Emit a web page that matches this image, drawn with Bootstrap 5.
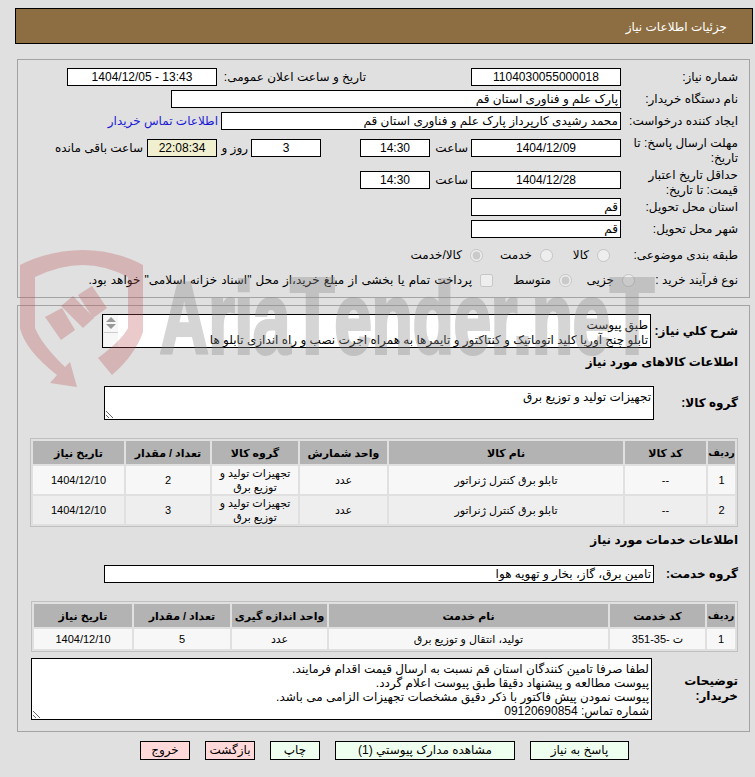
<!DOCTYPE html>
<html lang="fa" dir="rtl">
<head>
    <meta charset="utf-8">
    <title>جزئیات اطلاعات نیاز</title>
    <link rel="stylesheet" href="https://cdn.jsdelivr.net/npm/bootstrap@5.3.0/dist/css/bootstrap.min.css">
    <style>
        html, body {
            height: 777px;
            overflow: hidden;
        }
        body {
            background: #e0e0e0;
            color: #000;
            font: 12px/15px "Liberation Sans", "DejaVu Sans", sans-serif;
            position: relative;
        }
        .head-bar {
            margin: 8px 2px 0 15px;
            height: 36px;
            line-height: 37px;
            padding-right: 25px;
            background: #8d6e42;
            border: 1px solid #000;
            color: #fff;
        }
        .box {
            margin: 15px 5px 0 17px;
            border: 1px solid #a3a3a3;
            padding: 8px 11px 8px 0;
        }
        .box + .box { margin-top: 7px; padding-bottom: 11px; }
        .frow { margin-bottom: 4px; height: 18px; }
        .frow.two { height: 30px; align-items: flex-start; margin-bottom: 2px; }
        .frow.two input { margin-top: 3px; }
        .frow.two .unit { margin-top: 5px; }
        .lbl { width: 117px; flex: none; }
        .lbl-b { font-weight: bold; width: 87px; flex: none; }
        .lbl-g { font-weight: bold; width: 84px; flex: none; }
        .lbl-short { width: 103px; flex: none; }
        .lbl-note { width: 86px; flex: none; font-weight: bold; }
        .fld {
            height: 18px;
            border: 1px solid #000;
            background: #fff;
            padding: 0 2px;
            font: inherit;
            outline: 0;
            border-radius: 0;
            flex: none;
        }
        input.fld { display: block; }
        .w150 { width: 150px; }
        .w70 { width: 70px; }
        .w450 { width: 450px; }
        .w400 { width: 400px; }
        .wide { width: 550px; }
        .wide-s { width: 549px; }
        .timer { background: #f0f0d0; width: 70px; }
        .area {
            display: block;
            padding: 3px 2px 0;
            resize: both;
            height: 34px;
        }
        .area-note { width: 621px; height: 62px; line-height: 14px; }
        .head-line { font-weight: bold; height: 16px; }
        .head-goods { margin: 7px 0 15px; }
        .head-serv { margin: 6px 0 16px; }
        .grid-tbl {
            border-collapse: separate;
            border-spacing: 2px;
            border: 1px solid #c0c0c0;
            table-layout: fixed;
            font-size: 11px;
            line-height: 14px;
            text-align: center;
            width: 707px;
            margin-top: 18px;
        }
        .grid-tbl th { background: #b3b3b3; height: 23px; padding: 0; }
        .grid-tbl th:first-child { font-size: 10px; }
        .grid-tbl td { padding: 0 4px; }
        .tbl-goods td { height: 28px; background: #f7f7f7; }
        .tbl-goods tr.alt td { background: #eee; }
        .tbl-serv td { height: 20px; background: #f7f7f7; }
        .act {
            height: 19px;
            padding: 0;
            font: inherit;
            border: 1px solid #000;
            border-radius: 0;
            color: #000;
            background: #efffef;
            flex: none;
            width: 50px;
        }
        .act.red { background: #ffd9d9; }
        .act.w99 { width: 99px; }
        .act.w180 { width: 180px; }
        .foot-row { margin-top: 9px; padding-right: 126px; gap: 15px; }
        .wm {
            position: absolute;
            left: 0;
            top: 0;
            pointer-events: none;
        }
        .wm-word {
            font: bold 100px "Liberation Sans", sans-serif;
            fill: #888;
            stroke: #888;
            stroke-width: 4px;
            opacity: .35;
        }
        .wm-cap { font-size: 108px; }
        .wm-shield { fill: #b85050; opacity: .3; }
        .mt-lbl2 { margin-right: 105px; width: 149px; flex: none; }
        .buyer-link { margin-right: 3px; color: #1a1ad6; }
        .unit-a { width: 41px; padding-right: 3px; flex: none; }
        .gap-days { margin-right: 39px; }
        .unit-b { width: 34px; padding-right: 3px; flex: none; }
        .row-creator { margin-bottom: 6px; }
        .gap-after-city { margin-bottom: 8px; }
        .gap-after-cat { margin-bottom: 7px; }
        .opt { flex: none; }
        .opt1 { width: 68px; padding-right: 11px; }
        .opt2 { width: 70px; }
        .opt3 { width: 63px; }
        .opt4 { width: 79px; }
        .radio-a { margin: 0; width: 13px; height: 13px; flex: none; }
        .txt-wide { word-spacing: .8px; }
        .note-row { margin-top: 6px; }
        /* scrollbar of the first textarea: headless chrome hides the native one */
        .sbar {
            position: absolute;
            left: 1px;
            top: 1px;
            width: 15px;
            height: 32px;
            background: #f7f7f7;
            border-left: 1px solid #eee;
        }
        .sbar-up, .sbar-down {
            display: block;
            width: 0;
            margin: 0 auto;
            border-left: 5px solid transparent;
            border-right: 5px solid transparent;
        }
        .sbar-up { border-bottom: 5px solid #999; margin-top: 2px; }
        .sbar-down { border-top: 5px solid #999; margin-top: 2px; }
        .sbar-line { display: block; height: 1px; background: #ccc; margin-top: 3px; }
    </style>
</head>
<body>
<div class="head-bar">جزئیات اطلاعات نیاز</div>

<div class="box">
    <div class="frow d-flex align-items-center">
        <div class="lbl">شماره نیاز:</div>
        <input class="fld w150 text-center" value="1104030055000018" readonly>
        <div class="mt-lbl2">تاریخ و ساعت اعلان عمومی:</div>
        <input class="fld w150 text-center" value="1404/12/05 - 13:43" dir="ltr" readonly>
    </div>
    <div class="frow d-flex align-items-center">
        <div class="lbl">نام دستگاه خریدار:</div>
        <input class="fld w450" value="پارک علم و فناوری استان قم" readonly>
    </div>
    <div class="frow d-flex align-items-center row-creator">
        <div class="lbl">ایجاد کننده درخواست:</div>
        <input class="fld w400" value="محمد رشیدی کارپرداز پارک علم و فناوری استان قم" readonly>
        <a href="#" class="text-decoration-none buyer-link">اطلاعات تماس خریدار</a>
    </div>
    <div class="frow two d-flex">
        <div class="lbl">مهلت ارسال پاسخ: تا تاریخ:</div>
        <input class="fld w150 text-center" value="1404/12/09" readonly>
        <span class="unit unit-a">ساعت</span>
        <input class="fld w70 text-center" value="14:30" readonly>
        <input class="fld w70 text-center gap-days" value="3" readonly>
        <span class="unit unit-b">روز و</span>
        <input class="fld timer text-center" value="22:08:34" readonly>
        <span class="unit pe-1">ساعت باقی مانده</span>
    </div>
    <div class="frow two d-flex mb-0">
        <div class="lbl">حداقل تاریخ اعتبار قیمت: تا تاریخ:</div>
        <input class="fld w150 text-center" value="1404/12/28" readonly>
        <span class="unit unit-a">ساعت</span>
        <input class="fld w70 text-center" value="14:30" readonly>
    </div>
    <div class="frow d-flex align-items-center">
        <div class="lbl">استان محل تحویل:</div>
        <input class="fld w150" value="قم" readonly>
    </div>
    <div class="frow d-flex align-items-center gap-after-city">
        <div class="lbl">شهر محل تحویل:</div>
        <input class="fld w150" value="قم" readonly>
    </div>
    <div class="frow d-flex align-items-center gap-after-cat">
        <div class="lbl">طبقه بندی موضوعی:</div>
        <label class="opt opt1 d-flex align-items-center gap-2"><input class="radio-a" type="radio" name="cat" disabled>کالا</label>
        <label class="opt opt2 d-flex align-items-center gap-2"><input class="radio-a" type="radio" name="cat" disabled>خدمت</label>
        <label class="opt d-flex align-items-center gap-2"><input class="radio-a" type="radio" name="cat" disabled checked>کالا/خدمت</label>
    </div>
    <div class="frow d-flex align-items-center mb-0">
        <div class="lbl-short">نوع فرآیند خرید :</div>
        <label class="opt opt3 d-flex align-items-center gap-2"><input class="radio-a" type="radio" name="proc" disabled>جزیی</label>
        <label class="opt opt4 d-flex align-items-center gap-2"><input class="radio-a" type="radio" name="proc" disabled checked>متوسط</label>
        <label class="opt txt-wide d-flex align-items-center gap-2"><input class="radio-a" type="checkbox" disabled>پرداخت تمام یا بخشی از مبلغ خرید،از محل "اسناد خزانه اسلامی" خواهد بود.</label>
    </div>
</div>

<div class="box">
    <div class="d-flex align-items-center">
        <div class="lbl-b">شرح کلي نیاز:</div>
        <div class="position-relative">
            <textarea class="fld area wide-s" readonly>طبق پیوست
تابلو چنج آوریا کلید اتوماتیک و کنتاکتور و تایمرها به همراه اجرت نصب و راه اندازی تابلو ها</textarea>
            <div class="sbar"><span class="sbar-up"></span><span class="sbar-down"></span><span class="sbar-line"></span></div>
        </div>
    </div>
    <div class="head-line head-goods">اطلاعات کالاهای مورد نیاز</div>
    <div class="d-flex align-items-center">
        <div class="lbl-g">گروه کالا:</div>
        <textarea class="fld area wide" readonly>تجهیزات تولید و توزیع برق</textarea>
    </div>
    <table class="grid-tbl tbl-goods">
        <colgroup><col style="width:27px"><col style="width:81px"><col style="width:234px"><col style="width:87px"><col style="width:86px"><col style="width:84px"><col style="width:91px"></colgroup>
        <tr>
            <th>ردیف</th><th>کد کالا</th><th>نام کالا</th><th>واحد شمارش</th><th>گروه کالا</th><th>تعداد / مقدار</th><th>تاریخ نیاز</th>
        </tr>
        <tr>
            <td>1</td><td>--</td><td>تابلو برق کنترل ژنراتور</td><td>عدد</td><td>تجهیزات تولید و توزیع برق</td><td>2</td><td>1404/12/10</td>
        </tr>
        <tr class="alt">
            <td>2</td><td>--</td><td>تابلو برق کنترل ژنراتور</td><td>عدد</td><td>تجهیزات تولید و توزیع برق</td><td>3</td><td>1404/12/10</td>
        </tr>
    </table>
    <div class="head-line head-serv">اطلاعات خدمات مورد نیاز</div>
    <div class="d-flex align-items-center">
        <div class="lbl-g">گروه خدمت:</div>
        <input class="fld wide" value="تامین برق، گاز، بخار و تهویه هوا" readonly>
    </div>
    <table class="grid-tbl tbl-serv">
        <colgroup><col style="width:28px"><col style="width:95px"><col style="width:279px"><col style="width:95px"><col style="width:96px"><col style="width:98px"></colgroup>
        <tr>
            <th>ردیف</th><th>کد خدمت</th><th>نام خدمت</th><th>واحد اندازه گیری</th><th>تعداد / مقدار</th><th>تاریخ نیاز</th>
        </tr>
        <tr>
            <td>1</td><td>ت -35-351</td><td>تولید، انتقال و توزیع برق</td><td>عدد</td><td>5</td><td>1404/12/10</td>
        </tr>
    </table>
    <div class="d-flex align-items-center note-row">
        <div class="lbl-note">توضیحات خریدار:</div>
        <textarea class="fld area area-note" readonly>لطفا صرفا تامین کنندگان استان قم نسبت به ارسال قیمت اقدام فرمایند.
پیوست مطالعه و پیشنهاد دقیقا طبق پیوست اعلام گردد.
پیوست نمودن پیش فاکتور با ذکر دقیق مشخصات تجهیزات الزامی می باشد.
شماره تماس: 09120690854</textarea>
    </div>
</div>

<div class="d-flex foot-row">
    <button class="btn act w99">پاسخ به نیاز</button>
    <button class="btn act w180">مشاهده مدارک پیوستي (1)</button>
    <button class="btn act">چاپ</button>
    <button class="btn act red">بازگشت</button>
    <button class="btn act red">خروج</button>
</div>

<!-- watermark lies over the page -->
<svg class="wm" width="755" height="777" viewBox="0 0 755 777">
    <g class="wm-shield">
        <path d="M20 265 Q50 250 83 250 Q115 250 143 265 L143 332 Q135 355 112 375 L98 358 Q122 340 128 328 L128 277 Q105 265 83 265 Q60 265 35 277 L35 328 Q42 345 65 367 L70 362 L77 387 L50 383 L57 375 Q25 350 20 328 Z"/>
        <path d="M45 317 L62 308 L75 330 L61 340 Z"/>
        <path d="M61 306 L73 296 L94 318 L83 328 Z"/>
        <path d="M78 295 L92 286 L107 308 L93 318 Z"/>
    </g>
    <text class="wm-word" transform="translate(160,353) scale(.67,1)" direction="ltr" unicode-bidi="bidi-override">Aria<tspan class="wm-cap">T</tspan>ender.ne<tspan class="wm-cap">T</tspan></text>
</svg>
</body>
</html>
